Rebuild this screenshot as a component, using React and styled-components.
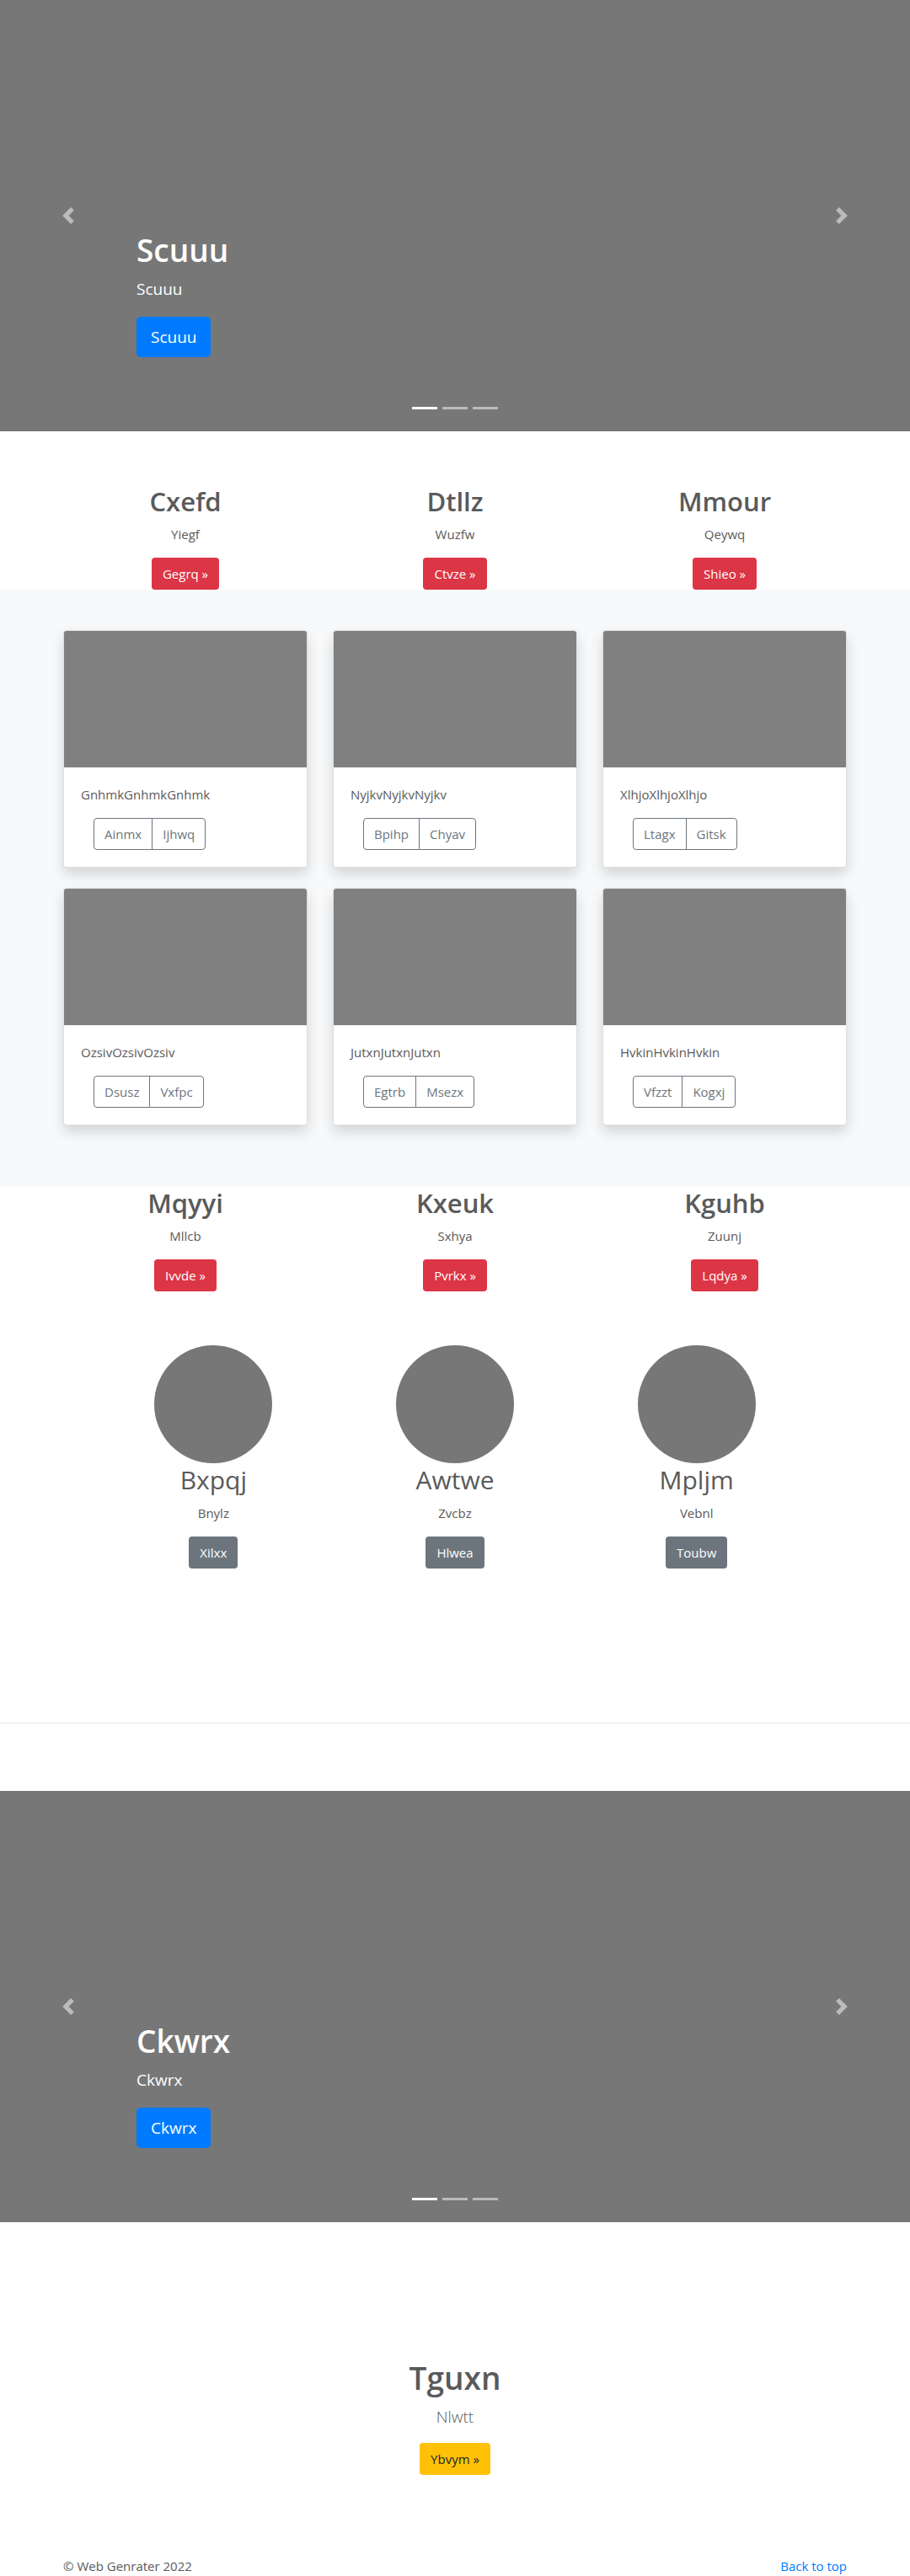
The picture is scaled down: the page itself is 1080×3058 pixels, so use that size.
import React from "react";
import styled, { createGlobalStyle, css } from "styled-components";

const GlobalStyle = createGlobalStyle`
  *, *::before, *::after { box-sizing: border-box; }
  body {
    margin: 0;
    background: #fff;
    color: #5a5a5a;
    font-family: "Open Sans", "Noto Sans", sans-serif;
    font-size: 15px;
    line-height: 24px;
  }
  h1, h2, p { margin: 0; }
  a { color: #007bff; text-decoration: none; }
`;

const tones = {
  primary: { bg: "#007bff", fg: "#fff" },
  danger: { bg: "#dc3545", fg: "#fff" },
  secondary: { bg: "#6c757d", fg: "#fff" },
  warning: { bg: "#ffc107", fg: "#212529" },
};

const ButtonLink = styled.a`
  display: inline-block;
  padding: 7px 13px;
  border-radius: 4px;
  background: ${({ $tone }) => tones[$tone].bg};
  color: ${({ $tone }) => tones[$tone].fg};
  ${({ $large }) =>
    $large &&
    css`
      padding: 9px 17px;
      border-radius: 5px;
      font-size: 19px;
      line-height: 30px;
    `}
`;

const Container = styled.div`
  max-width: 960px;
  margin: 0 auto;
  padding: 0 15px;
`;

/* Carousel */

const CarouselFrame = styled.section`
  position: relative;
  display: flex;
  flex-direction: column;
  justify-content: flex-end;
  height: 512px;
  background: #777;
  color: #fff;
`;

const Caption = styled.div`
  display: flex;
  flex-direction: column;
  align-items: flex-start;
  padding: 0 15% 88px;
`;

const Title = styled.h1`
  margin-bottom: 6px;
  font-size: 37px;
  font-weight: 600;
  line-height: 50px;
`;

const CaptionText = styled.p`
  margin-bottom: 18px;
  font-size: 19px;
  line-height: 30px;
`;

const Control = styled.button`
  position: absolute;
  top: 0;
  bottom: 0;
  ${({ $side }) => $side}: 0;
  display: flex;
  align-items: center;
  justify-content: center;
  width: 15%;
  padding: 0;
  border: 0;
  background: transparent;
  color: #fff;
  opacity: 0.5;
  cursor: pointer;
`;

const Indicators = styled.div`
  position: absolute;
  right: 15%;
  bottom: 26px;
  left: 15%;
  display: flex;
  justify-content: center;
  gap: 6px;
`;

const Indicator = styled.button`
  width: 30px;
  height: 3px;
  padding: 0;
  border: 0;
  background: #fff;
  opacity: ${({ $active }) => ($active ? 1 : 0.5)};
  cursor: pointer;
`;

const arrows = {
  left: "M5.25 0l-4 4 4 4 1.5-1.5L4.25 4l2.5-2.5L5.25 0z",
  right: "M2.75 0l-1.5 1.5L3.75 4l-2.5 2.5L2.75 8l4-4-4-4z",
};

function Carousel({ text }) {
  return (
    <CarouselFrame>
      <Caption>
        <Title>{text}</Title>
        <CaptionText>{text}</CaptionText>
        <ButtonLink href="#" $tone="primary" $large>{text}</ButtonLink>
      </Caption>
      {["left", "right"].map((side) => (
        <Control key={side} type="button" $side={side} aria-label={side === "left" ? "Previous" : "Next"}>
          <svg width="20" height="20" viewBox="0 0 8 8" fill="currentColor" aria-hidden="true">
            <path d={arrows[side]} />
          </svg>
        </Control>
      ))}
      <Indicators>
        {[1, 2, 3].map((n) => (
          <Indicator key={n} type="button" $active={n === 1} aria-label={`Slide ${n}`} />
        ))}
      </Indicators>
    </CarouselFrame>
  );
}

/* Three-column features */

const FeatureGrid = styled.div`
  display: grid;
  grid-template-columns: repeat(3, 1fr);
  column-gap: ${({ $inset }) => ($inset ? 0 : 30)}px;
  padding: 0 ${({ $inset }) => ($inset ? 35 : 0)}px;
`;

const FeatureItem = styled.div`
  display: flex;
  flex-direction: column;
  align-items: center;
  text-align: center;
`;

const FeatureTitle = styled.h2`
  margin-bottom: 7px;
  font-size: ${({ $light }) => ($light ? 30 : 31)}px;
  font-weight: ${({ $light }) => ($light ? 400 : 600)};
  line-height: 40px;
`;

const FeatureText = styled.p`
  margin-bottom: 16px;
`;

const Avatar = styled.div`
  width: 140px;
  height: 140px;
  border-radius: 50%;
  background: #777;
`;

function Features({ items, tone, avatar = false }) {
  return (
    <FeatureGrid $inset={avatar}>
      {items.map(([title, text, action]) => (
        <FeatureItem key={title}>
          {avatar && <Avatar />}
          <FeatureTitle $light={avatar}>{title}</FeatureTitle>
          <FeatureText>{text}</FeatureText>
          <ButtonLink href="#" $tone={tone}>{action}</ButtonLink>
        </FeatureItem>
      ))}
    </FeatureGrid>
  );
}

const IntroSection = styled.section`
  padding-top: 63px;
`;

const AvatarSection = styled.section`
  padding: 64px 0 103px;
`;

/* Album */

const Album = styled.section`
  padding: 48px 0 72px;
  background: #f8f9fa;
`;

const AlbumGrid = styled.div`
  display: grid;
  grid-template-columns: repeat(3, 1fr);
  gap: 24px 30px;
`;

const Card = styled.article`
  border: 1px solid rgba(0, 0, 0, 0.125);
  border-radius: 4px;
  background: #fff;
  box-shadow: 0 8px 16px rgba(0, 0, 0, 0.15);
`;

const CardImage = styled.div`
  height: 162px;
  border-radius: 3px 3px 0 0;
  background: #808080;
`;

const CardBody = styled.div`
  padding: 20px;
`;

const CardText = styled.p`
  margin-bottom: 16px;
`;

const ButtonGroup = styled.div`
  display: flex;
  padding-left: 15px;
`;

const OutlineButton = styled.button`
  padding: 6px 12px;
  border: 1px solid #6c757d;
  background: transparent;
  color: #6c757d;
  font: inherit;
  cursor: pointer;

  &:first-child { border-radius: 4px 0 0 4px; }
  &:last-child { margin-left: -1px; border-radius: 0 4px 4px 0; }
`;

/* Closing part */

const Divider = styled.hr`
  height: 1px;
  margin: 80px 0;
  border: 0;
  background: rgba(0, 0, 0, 0.1);
`;

const CallToAction = styled.section`
  display: flex;
  flex-direction: column;
  align-items: center;
  padding: 160px 15px 96px;
`;

const Lead = styled.p`
  margin-bottom: 16px;
  font-size: 19px;
  font-weight: 300;
  line-height: 30px;
`;

const FooterRow = styled.footer`
  display: flex;
  justify-content: space-between;
`;

const intro = [
  ["Cxefd", "Yiegf", "Gegrq »"],
  ["Dtllz", "Wuzfw", "Ctvze »"],
  ["Mmour", "Qeywq", "Shieo »"],
];

const cards = [
  ["GnhmkGnhmkGnhmk", "Ainmx", "Ijhwq"],
  ["NyjkvNyjkvNyjkv", "Bpihp", "Chyav"],
  ["XlhjoXlhjoXlhjo", "Ltagx", "Gitsk"],
  ["OzsivOzsivOzsiv", "Dsusz", "Vxfpc"],
  ["JutxnJutxnJutxn", "Egtrb", "Msezx"],
  ["HvkinHvkinHvkin", "Vfzzt", "Kogxj"],
];

const more = [
  ["Mqyyi", "Mllcb", "Ivvde »"],
  ["Kxeuk", "Sxhya", "Pvrkx »"],
  ["Kguhb", "Zuunj", "Lqdya »"],
];

const people = [
  ["Bxpqj", "Bnylz", "Xilxx"],
  ["Awtwe", "Zvcbz", "Hlwea"],
  ["Mpljm", "Vebnl", "Toubw"],
];

export default function App() {
  return (
    <>
      <GlobalStyle />
      <main>
        <Carousel text="Scuuu" />
        <IntroSection>
          <Container><Features items={intro} tone="danger" /></Container>
        </IntroSection>
        <Album>
          <Container>
            <AlbumGrid>
              {cards.map(([text, first, second]) => (
                <Card key={text}>
                  <CardImage />
                  <CardBody>
                    <CardText>{text}</CardText>
                    <ButtonGroup>
                      <OutlineButton type="button">{first}</OutlineButton>
                      <OutlineButton type="button">{second}</OutlineButton>
                    </ButtonGroup>
                  </CardBody>
                </Card>
              ))}
            </AlbumGrid>
          </Container>
        </Album>
        <Container><Features items={more} tone="danger" /></Container>
        <AvatarSection>
          <Container><Features items={people} tone="secondary" avatar /></Container>
        </AvatarSection>
        <Divider />
        <Carousel text="Ckwrx" />
        <CallToAction>
          <Title>Tguxn</Title>
          <Lead>Nlwtt</Lead>
          <ButtonLink href="#" $tone="warning">Ybvym »</ButtonLink>
        </CallToAction>
      </main>
      <Container>
        <FooterRow>
          <p>© Web Genrater 2022</p>
          <a href="#">Back to top</a>
        </FooterRow>
      </Container>
    </>
  );
}
